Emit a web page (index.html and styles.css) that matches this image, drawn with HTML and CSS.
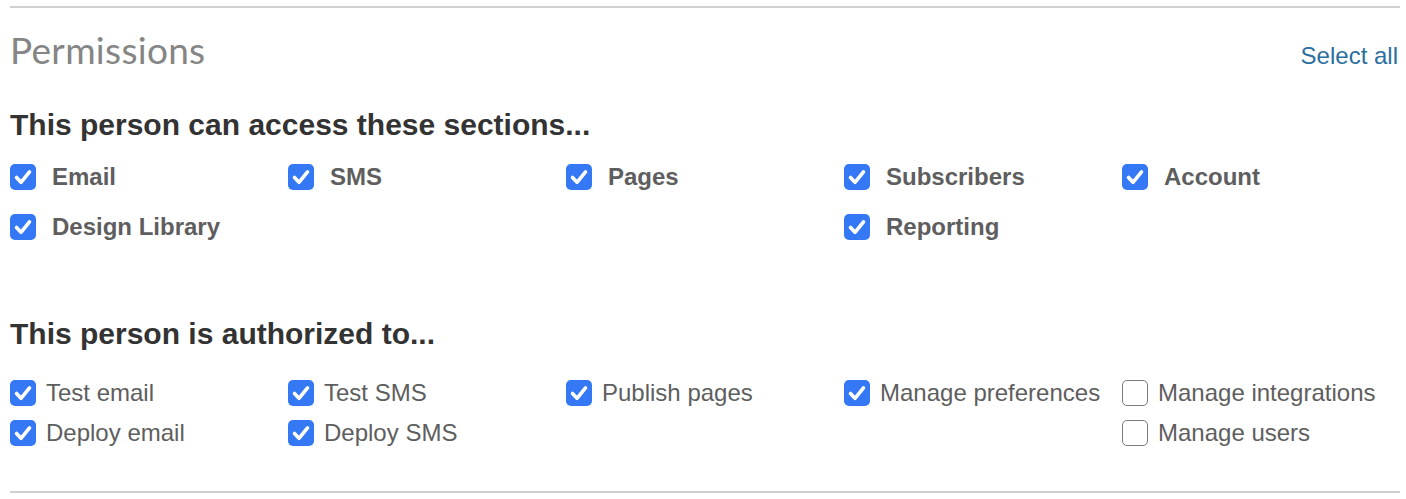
FILE: index.html
```html
<!DOCTYPE html>
<html lang="en">
<head>
  <meta charset="UTF-8">
  <meta name="viewport" content="width=device-width, initial-scale=1">
  <title>Permissions</title>
  <link rel="stylesheet" href="styles.css">
</head>
<body>
  <section class="permissions">
    <div class="permissions-header">
      <h1>Permissions</h1>
      <a href="#" class="select-all">Select all</a>
    </div>

    <h2>This person can access these sections...</h2>
    <div class="option-grid sections">
      <label class="option"><span class="box checked"><svg viewBox="0 0 26 26"><path d="M6.5 13.5l4.5 4.8 8.5-10.5"/></svg></span>Email</label>
      <label class="option"><span class="box checked"><svg viewBox="0 0 26 26"><path d="M6.5 13.5l4.5 4.8 8.5-10.5"/></svg></span>SMS</label>
      <label class="option"><span class="box checked"><svg viewBox="0 0 26 26"><path d="M6.5 13.5l4.5 4.8 8.5-10.5"/></svg></span>Pages</label>
      <label class="option"><span class="box checked"><svg viewBox="0 0 26 26"><path d="M6.5 13.5l4.5 4.8 8.5-10.5"/></svg></span>Subscribers</label>
      <label class="option"><span class="box checked"><svg viewBox="0 0 26 26"><path d="M6.5 13.5l4.5 4.8 8.5-10.5"/></svg></span>Account</label>
      <label class="option"><span class="box checked"><svg viewBox="0 0 26 26"><path d="M6.5 13.5l4.5 4.8 8.5-10.5"/></svg></span>Design Library</label>
      <div></div>
      <div></div>
      <label class="option"><span class="box checked"><svg viewBox="0 0 26 26"><path d="M6.5 13.5l4.5 4.8 8.5-10.5"/></svg></span>Reporting</label>
      <div></div>
    </div>

    <h2>This person is authorized to...</h2>
    <div class="option-grid actions">
      <label class="option"><span class="box checked"><svg viewBox="0 0 26 26"><path d="M6.5 13.5l4.5 4.8 8.5-10.5"/></svg></span>Test email</label>
      <label class="option"><span class="box checked"><svg viewBox="0 0 26 26"><path d="M6.5 13.5l4.5 4.8 8.5-10.5"/></svg></span>Test SMS</label>
      <label class="option"><span class="box checked"><svg viewBox="0 0 26 26"><path d="M6.5 13.5l4.5 4.8 8.5-10.5"/></svg></span>Publish pages</label>
      <label class="option"><span class="box checked"><svg viewBox="0 0 26 26"><path d="M6.5 13.5l4.5 4.8 8.5-10.5"/></svg></span>Manage preferences</label>
      <label class="option"><span class="box"></span>Manage integrations</label>
      <label class="option"><span class="box checked"><svg viewBox="0 0 26 26"><path d="M6.5 13.5l4.5 4.8 8.5-10.5"/></svg></span>Deploy email</label>
      <label class="option"><span class="box checked"><svg viewBox="0 0 26 26"><path d="M6.5 13.5l4.5 4.8 8.5-10.5"/></svg></span>Deploy SMS</label>
      <div></div>
      <div></div>
      <label class="option"><span class="box"></span>Manage users</label>
    </div>
  </section>
</body>
</html>
```

FILE: styles.css
```css
body {
  margin: 0;
  font-family: 'Liberation Sans', Arial, sans-serif;
  background: #fff;
  color: #333;
}

.permissions {
  margin: 6px 6px 0 10px;
  border-top: 2px solid #d0d0d0;
  border-bottom: 2px solid #d0d0d0;
  padding-bottom: 38px;
}

.permissions-header {
  display: flex;
  justify-content: space-between;
  align-items: baseline;
  padding-top: 22px;
}

h1 {
  margin: 0;
  font-family: Lato, 'Open Sans', sans-serif;
  font-weight: 400;
  font-size: 37px;
  line-height: 40px;
  color: #858585;
  letter-spacing: 0.3px;
}

.select-all {
  font-size: 24px;
  color: #2b6f9f;
  text-decoration: none;
  margin-right: 2px;
}

h2 {
  margin: 0;
  font-size: 30px;
  line-height: 34px;
  font-weight: bold;
  color: #333;
}

.permissions-header + h2 {
  margin-top: 38px;
}

.option-grid {
  display: grid;
  grid-template-columns: repeat(5, 278px);
}

.option {
  display: flex;
  align-items: center;
  color: #5e5e5e;
  font-size: 24px;
  white-space: nowrap;
}

.box {
  flex: none;
  width: 26px;
  height: 26px;
  box-sizing: border-box;
  border-radius: 5px;
  border: 1.5px solid #7a7a7a;
  background: #fff;
}

.box.checked {
  border: none;
  background: #3478f6;
}

.box svg {
  display: block;
  width: 26px;
  height: 26px;
  fill: none;
  stroke: #fff;
  stroke-width: 3.6;
  stroke-linecap: round;
  stroke-linejoin: round;
}

.sections {
  margin-top: 10px;
  grid-auto-rows: 50px;
  margin-bottom: 65px;
}

.sections .option {
  font-weight: bold;
  gap: 16px;
}

.actions {
  margin-top: 22px;
  grid-auto-rows: 40px;
}

.actions .option {
  gap: 10px;
}
```
